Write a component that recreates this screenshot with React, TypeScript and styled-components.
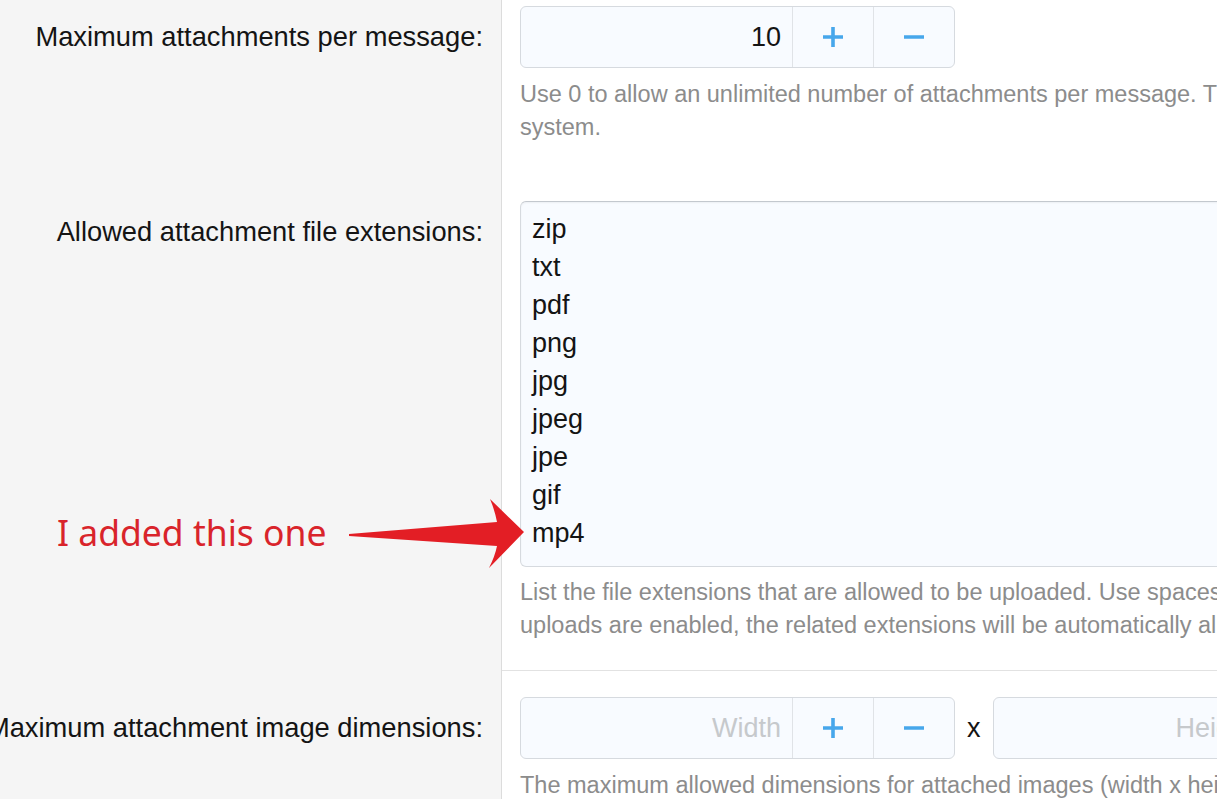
import React from 'react';
import styled, { createGlobalStyle } from 'styled-components';

const GlobalStyle = createGlobalStyle`
  html, body {
    margin: 0;
    padding: 0;
    background: #ffffff;
    overflow: hidden;
  }
  body {
    font-family: "Liberation Sans", Arial, sans-serif;
    color: #141414;
  }
`;

const Page = styled.div`
  position: relative;
  width: 1500px;
`;

const FormRow = styled.div<{ $top: number, $separated?: boolean }>`
  display: grid;
  grid-template-columns: 502px 1fr;

  & > dt {
    padding-top: ${(p) => p.$top + 12}px;
  }
  & > dd {
    padding-top: ${(p) => p.$top}px;
    border-bottom: ${(p) => (p.$separated ? '1px solid #e2e2e2' : 'none')};
  }
`;

const RowLabel = styled.dt`
  margin: 0;
  background: #f5f5f5;
  border-right: 1px solid #dcdcdc;
  padding-right: 18px;
  display: flex;
  justify-content: flex-end;
  align-items: flex-start;
  overflow: hidden;
  font-size: 27.3px;
  line-height: 37.8px;

  & > span {
    white-space: nowrap;
    flex-shrink: 0;
  }
`;

const RowInput = styled.dd`
  margin: 0;
  padding: 0 18px 28px 18px;
`;

const Hint = styled.div`
  margin-top: 9.5px;
  width: 1200px;
  font-size: 23.5px;
  line-height: 33px;
  color: #8c8c8c;
`;

const InputPair = styled.div`
  display: flex;
  align-items: center;
  gap: 12px;
`;

const Times = styled.span`
  font-size: 27px;
  color: #141414;
`;

const NumberBox = styled.div`
  display: flex;
  width: 435px;
  height: 62px;
  box-sizing: border-box;
  border: 1px solid #d6dadf;
  border-radius: 6px;
  background: #f8fbff;
  overflow: hidden;
  flex-shrink: 0;
`;

const NumberField = styled.input`
  flex: 1;
  min-width: 0;
  border: none;
  background: transparent;
  padding: 0 11px 0 12px;
  text-align: right;
  font-family: "Liberation Sans", Arial, sans-serif;
  font-size: 27px;
  color: #141414;
  outline: none;

  &::placeholder {
    color: #c6c9cc;
  }
`;

const StepButton = styled.button`
  width: 81px;
  flex-shrink: 0;
  border: none;
  border-left: 1px solid #e0e3e7;
  background: transparent;
  padding: 0;
  display: flex;
  align-items: center;
  justify-content: center;
  color: #47a7eb;
`;

const ExtensionArea = styled.textarea`
  display: block;
  width: 1400px;
  height: 366px;
  box-sizing: border-box;
  margin: 0;
  padding: 8px 11px;
  border: 1px solid #d6dadf;
  border-top-color: #c3c8ce;
  border-radius: 6px;
  background: #f8fbff;
  box-shadow: inset 0 1px 2px rgba(0, 0, 0, 0.05);
  font-family: "Liberation Sans", Arial, sans-serif;
  font-size: 27px;
  line-height: 38px;
  color: #141414;
  resize: none;
  overflow: hidden;
  outline: none;
`;

const Note = styled.div`
  position: absolute;
  left: 57px;
  top: 507px;
  font-family: "Noto Sans", "Open Sans", sans-serif;
  font-size: 35.5px;
  line-height: 50px;
  color: #d9242b;
  white-space: nowrap;
`;

const Arrow = styled.svg`
  position: absolute;
  left: 0;
  top: 0;
  pointer-events: none;
`;

const PlusIcon = () => (
  <svg width="22" height="22" viewBox="0 0 22 22">
    <path d="M11 1v20M1 11h20" stroke="currentColor" strokeWidth="3.6" />
  </svg>
);

const MinusIcon = () => (
  <svg width="22" height="22" viewBox="0 0 22 22">
    <path d="M1 11h20" stroke="currentColor" strokeWidth="3.6" />
  </svg>
);

const NumberInput: React.FC<{ value?: string, placeholder?: string }> = ({ value, placeholder }) => (
  <NumberBox>
    <NumberField readOnly value={value ?? ''} placeholder={placeholder} />
    <StepButton type="button"><PlusIcon /></StepButton>
    <StepButton type="button"><MinusIcon /></StepButton>
  </NumberBox>
);

const extensions = ['zip', 'txt', 'pdf', 'png', 'jpg', 'jpeg', 'jpe', 'gif', 'mp4'];

const App: React.FC = () => (
  <Page>
    <GlobalStyle />
    <FormRow $top={6}>
      <RowLabel><span>Maximum attachments per message:</span></RowLabel>
      <RowInput>
        <NumberInput value="10" />
        <Hint>
          Use 0 to allow an unlimited number of attachments per message. This value cannot exceed the limit set by the
          <br />
          system.
        </Hint>
      </RowInput>
    </FormRow>
    <FormRow $top={29} $separated>
      <RowLabel><span>Allowed attachment file extensions:</span></RowLabel>
      <RowInput>
        <ExtensionArea readOnly value={extensions.join('\n')} />
        <Hint>
          List the file extensions that are allowed to be uploaded. Use spaces or line breaks between extensions. If video
          <br />
          uploads are enabled, the related extensions will be automatically allowed.
        </Hint>
      </RowInput>
    </FormRow>
    <FormRow $top={26}>
      <RowLabel><span>Maximum attachment image dimensions:</span></RowLabel>
      <RowInput>
        <InputPair>
          <NumberInput placeholder="Width" />
          <Times>x</Times>
          <NumberInput placeholder="Height" />
        </InputPair>
        <Hint>The maximum allowed dimensions for attached images (width x height), in pixels.</Hint>
      </RowInput>
    </FormRow>

    <Note>I added this one</Note>
    <Arrow width="1217" height="799" viewBox="0 0 1217 799">
      <path
        d="M349 534 L497 522 Q495 511 490 499 L524 532 L489 568 Q495 556 497 546 L349 536 Z"
        fill="#e31e25"
      />
    </Arrow>
  </Page>
);

export default App;
